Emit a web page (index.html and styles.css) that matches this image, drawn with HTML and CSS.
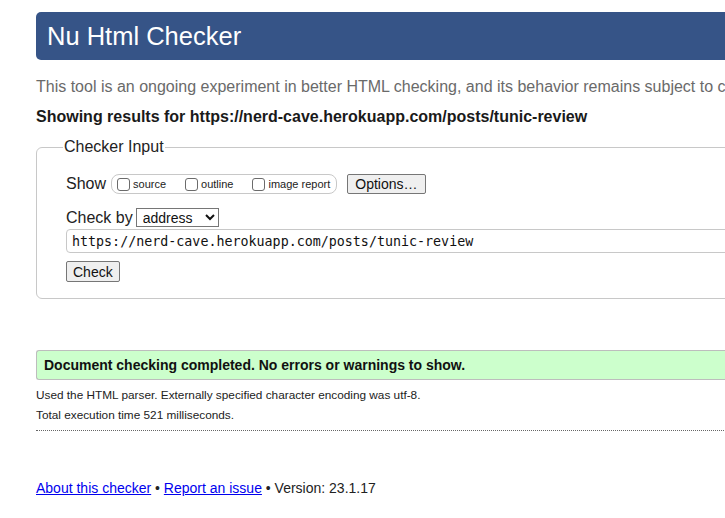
FILE: index.html
```html
<!DOCTYPE html>
<html lang="en">
<head>
<meta charset="utf-8">
<title>Nu Html Checker</title>
<link rel="stylesheet" href="styles.css">
</head>
<body>
<div class="page">
  <h1 class="banner">Nu Html Checker</h1>
  <p class="intro">This tool is an ongoing experiment in better HTML checking, and its behavior remains subject to change.</p>
  <p class="showing">Showing results for https://nerd-cave.herokuapp.com/posts/tunic-review</p>
  <fieldset class="checker">
    <legend class="legend">Checker Input</legend>
    <div class="row show-row">
      <span class="lbl">Show</span>
      <span class="opts">
        <label class="opt"><input type="checkbox" class="cb">source</label>
        <label class="opt"><input type="checkbox" class="cb">outline</label>
        <label class="opt last"><input type="checkbox" class="cb">image report</label>
      </span>
      <button class="btn options">Options…</button>
    </div>
    <div class="row by-row">
      <span class="lbl">Check by</span>
      <select class="sel"><option>address</option></select>
    </div>
    <input class="url" type="text" value="https://nerd-cave.herokuapp.com/posts/tunic-review">
    <div class="row">
      <button class="btn check">Check</button>
    </div>
  </fieldset>
  <p class="success">Document checking completed. No errors or warnings to show.</p>
  <div class="detail-block">
    <p class="details">Used the HTML parser. Externally specified character encoding was utf-8.</p>
    <p class="details">Total execution time 521 milliseconds.</p>
  </div>
  <div class="dotted"></div>
  <p class="footer"><a href="#">About this checker</a> • <a href="#">Report an issue</a> • Version: 23.1.17</p>
</div>
</body>
</html>
```
FILE: styles.css
```css
html { overflow: hidden; }
body {
  margin: 0;
  font-family: "Liberation Sans", Arial, sans-serif;
  color: #1a1a1a;
  background: #fff;
}
.page {
  width: 1000px;
  padding: 12px 0 0 36px;
}
.banner {
  margin: 0;
  height: 48px;
  line-height: 48px;
  background: #365487;
  color: #fff;
  font-weight: normal;
  font-size: 25.5px;
  padding-left: 11px;
  border-radius: 5px 0 0 5px;
}
.intro {
  margin: 17px 0 0;
  font-size: 16px;
  line-height: 20px;
  color: #6a6a6a;
  white-space: nowrap;
}
.showing {
  margin: 10px 0 0;
  font-size: 16px;
  line-height: 20px;
  font-weight: bold;
  white-space: nowrap;
}
.checker {
  margin: 11px 0 0;
  border: 1px solid #c8c8c8;
  border-radius: 6px;
  padding: 8px 0 16px 29px;
}
.legend {
  margin-left: -3px;
  padding: 0 1px;
  font-size: 16px;
  line-height: 18px;
  color: #222;
}
.row {
  display: flex;
  align-items: center;
}
.show-row { height: 20px; margin-top: 10px; }
.lbl { font-size: 16px; color: #222; }
.opts {
  display: flex;
  align-items: center;
  margin-left: 5px;
  height: 18px;
  border: 1px solid #c8c8c8;
  border-radius: 8px;
  padding: 0 6px 0 5px;
  font-size: 11px;
  color: #222;
}
.opt { display: flex; align-items: center; margin-right: 19px; }
.opt.last { margin-right: 0; }
.cb {
  appearance: none;
  width: 13px;
  height: 13px;
  margin: 0 3px 0 0;
  border: 1px solid #6b6b6b;
  border-radius: 3px;
  background: #fff;
}
.btn {
  font-family: "Liberation Sans", Arial, sans-serif;
  font-size: 14px;
  background: #efefef;
  border: 1px solid #767676;
  border-radius: 2px;
  color: #111;
  padding: 0 7px;
  height: 20px;
}
.options { margin-left: 10px; }
.by-row { margin-top: 14px; height: 19px; }
.sel {
  margin-left: 3px;
  font-family: "Liberation Sans", Arial, sans-serif;
  font-size: 14px;
  width: 83px;
  height: 19px;
  border: 1px solid #767676;
  border-radius: 0;
  padding: 0 2px;
  background: #fff;
  color: #111;
}
.url {
  display: block;
  margin: 2px 0 0;
  box-sizing: border-box;
  width: 940px;
  height: 24px;
  border: 1px solid #c8c8c8;
  border-radius: 4px 0 0 4px;
  padding: 0 5px;
  font-family: "DejaVu Sans Mono", monospace;
  font-size: 13.33px;
  color: #111;
  outline: none;
}
.check { margin-top: 8px; padding: 0 6px; height: 21px; }
.success {
  margin: 51px 0 0;
  height: 28px;
  line-height: 28px;
  background: #ccffcc;
  border: 1px solid #bdbdbd;
  border-right: none;
  border-radius: 3px 0 0 3px;
  padding-left: 7px;
  font-weight: bold;
  font-size: 14px;
  color: #111;
}
.detail-block {
  display: flex;
  flex-direction: column;
  gap: 6px;
  margin-top: 8px;
}
.details {
  margin: 0;
  font-size: 11.8px;
  line-height: 14px;
  color: #222;
}
.dotted {
  margin-top: 8px;
  border-bottom: 1px dotted #666;
}
.footer {
  margin: 49px 0 0;
  font-size: 14px;
  color: #222;
}
.footer a { color: #0000ee; }
```
